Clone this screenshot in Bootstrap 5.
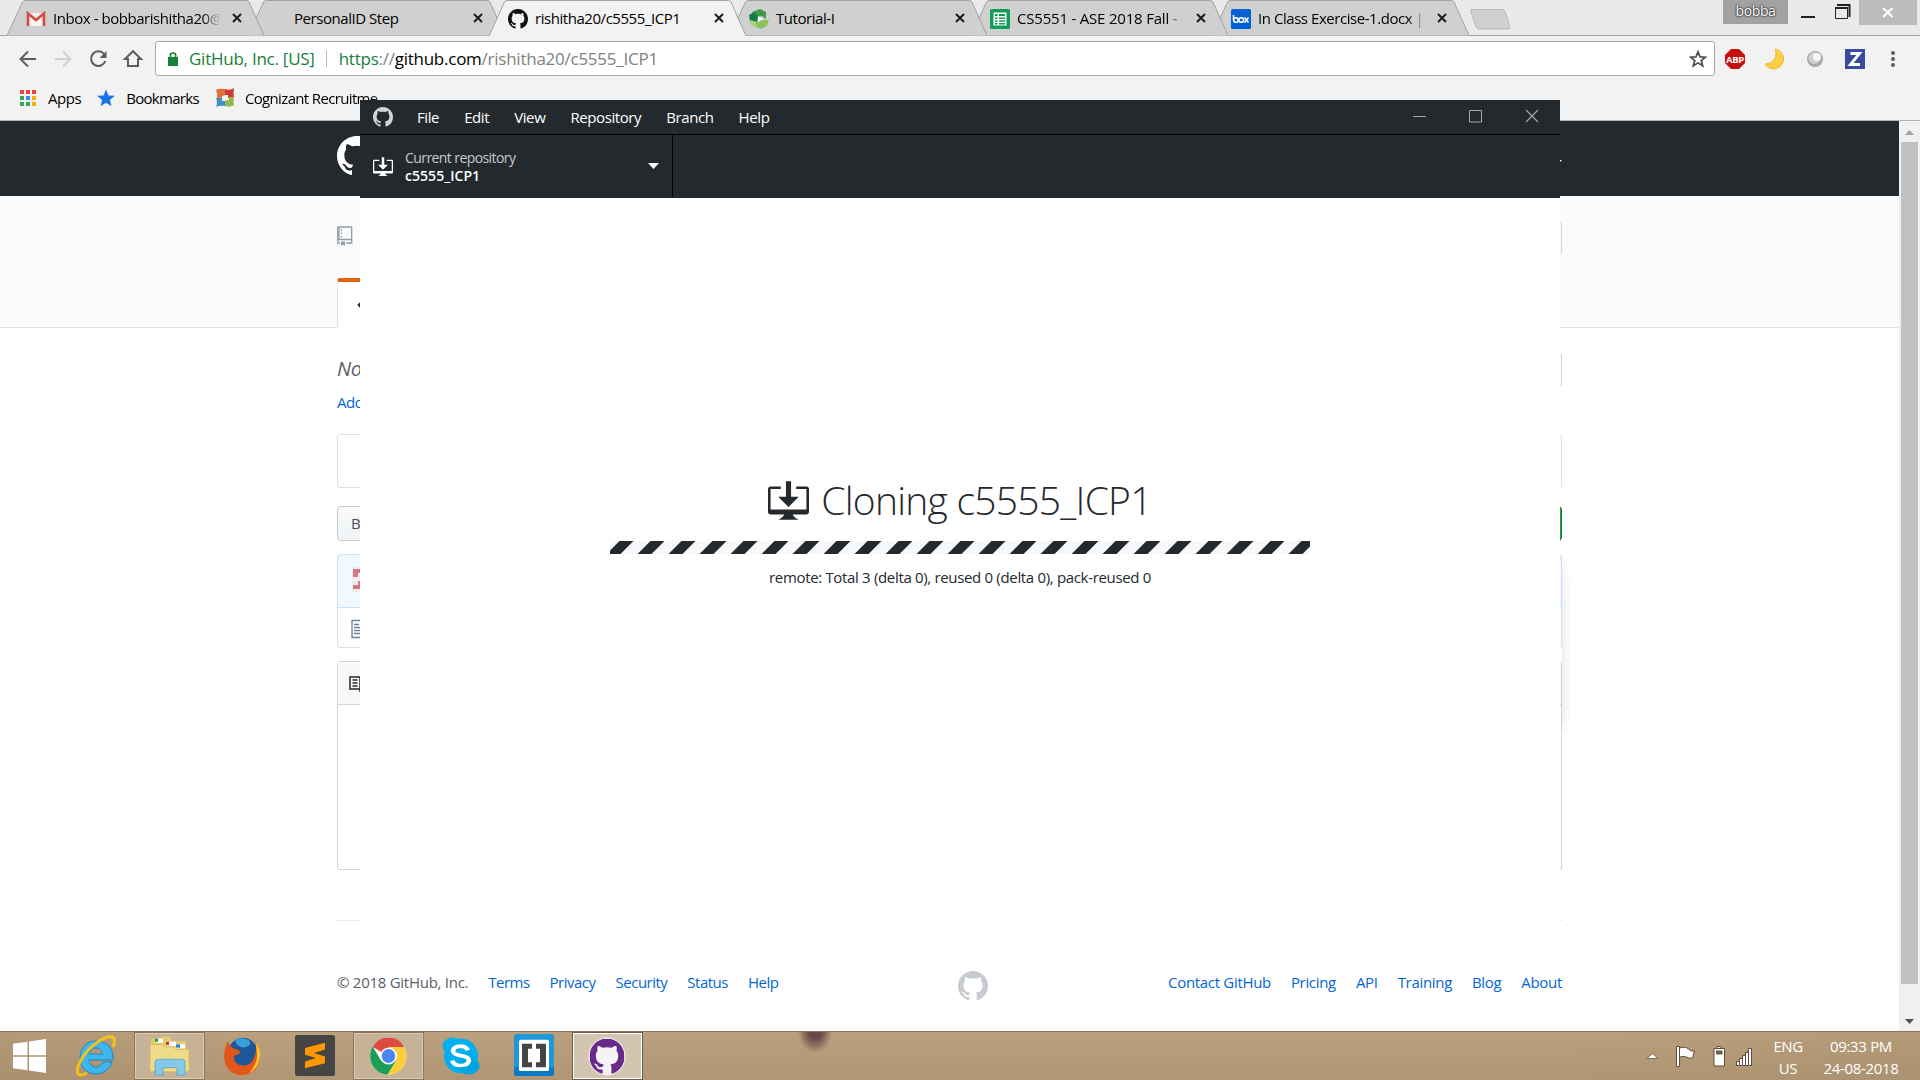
<!DOCTYPE html>
<html lang="en">
<head>
<meta charset="utf-8">
<title>rishitha20/c5555_ICP1</title>
<link href="https://cdn.jsdelivr.net/npm/bootstrap@5.3.0/dist/css/bootstrap.min.css" rel="stylesheet">
<script src="https://cdn.jsdelivr.net/npm/bootstrap@5.3.0/dist/js/bootstrap.bundle.min.js"></script>
<style>
body{font-family:"Open Sans","Noto Sans",sans-serif;font-size:15px;letter-spacing:-.45px;line-height:20px;color:#000;margin:0}
svg{display:block;flex:none}
a{text-decoration:none;color:#0366d6}
.screen{width:1920px;height:1080px}
/* tab strip */
.tabstrip{height:36px;background:#eaeaea;padding-left:7px;border-bottom:1px solid #a2a2a2}
.ctab{width:257px;height:36px;margin-right:-16px;padding:0 22px 0 19px;flex:none;position:relative;z-index:1;isolation:isolate}
.ctab .shape{position:absolute;left:0;top:0;z-index:-1}
.ctab.front{z-index:9}
.fav{width:20px;height:20px;margin-top:1px}
.tlabel{width:168px;margin-left:7px;white-space:pre;overflow:hidden;margin-top:-1px}
.fade-r{-webkit-mask-image:linear-gradient(90deg,#000 89%,transparent 100%)}
.who{width:65px;height:24px;background:#a2a2a2;color:#fff;font-size:14px;text-shadow:0 0 2px #000,0 0 2px #333;letter-spacing:-.4px;padding-bottom:2px}
.winx{width:58px;height:25px;background:#bcbcbc}
/* toolbar */
.toolbar{height:46px;background:#f2f2f2;padding:5px 0 0 18px}
.omni{width:1560px;height:35px;background:#fff;border:1px solid #a9a9a9;border-radius:3px;font-size:17px;letter-spacing:-.25px;padding-left:12px}
.green{color:#188038}.dim{color:#808080}
.bookbar{height:39px;background:#f2f2f2;border-bottom:1px solid #b3b3b3;padding:0 0 7px 19px}
/* page */
.page{background:#fff}
.gh-head{height:75px;background:#24292e}
.gh-repo{height:132px;background:#fafbfc;border-bottom:1px solid #e1e4e8}
.gh-wrap{width:1225px;margin-left:337px}
.gh-tab{width:110px;height:50px;background:#fff;border:1px solid #e1e4e8;border-top:4px solid #e36209;border-bottom:0;border-radius:3px 3px 0 0;margin-bottom:-1px}
.edge{border:1px solid #d1d5da;border-radius:3px}
.btn-grad{background:linear-gradient(#fafbfc,#eff3f6);border:1px solid #c5c9cd;border-radius:4px;width:180px;height:35px;color:#444d56;padding:0 0 2px 13px}
.btn-clone{width:180px;height:35px;background:#28a745;border:1px solid #176f2c}
.sbar{width:21px;background:#f0f0f0}
.thumb{width:17px;height:842px;background:#c1c1c1}
.shadow-menu{left:1562px;top:432px;width:9px;height:182px;background:linear-gradient(90deg,rgba(27,31,35,.07),transparent);-webkit-mask-image:linear-gradient(transparent,#000 15%,#000 90%,transparent)}
/* desktop window */
.desk{left:360px;top:100px;width:1200px;height:840px;background:#fff;z-index:20}
.dmenu{height:35px;background:#24292e;border-bottom:1px solid #000;color:#fff;padding-left:13px;letter-spacing:-.4px}
.dbar{height:63px;background:#24292e}
.drepo{width:313px;height:62px;border-right:1px solid #000;padding-left:13px}
.big{font-size:39px;font-weight:300;letter-spacing:-.75px;line-height:50px;color:#24292e}
/* taskbar */
.task{height:49px;border-top:1px solid #8c7558;background:linear-gradient(rgba(255,235,200,.06),rgba(0,0,0,.03)),linear-gradient(90deg,#ae9473,#b69b78 14%,#b69b78 80%,#b09673);position:relative;overflow:hidden}
.tbtn{height:48px;width:73px}
.tbtn.open{width:71px;border:1px solid #8c775c;box-shadow:inset 0 0 0 1px #d9cbb5;background:#c5b297}
.tbtn.act{border-color:#6b5a45;box-shadow:inset 0 0 0 1px #fff;background:#d3c5af}
.blob{position:absolute;left:797px;top:-8px;width:36px;height:30px;background:radial-gradient(ellipse at 50% 20%,#6b484c 25%,rgba(120,90,82,.7) 45%,transparent 68%)}
.tray{color:#fff;line-height:22px;text-align:center;padding-top:3px}
</style>
</head>
<body class="overflow-hidden">
<svg width="0" height="0" class="position-absolute">
<defs>
<symbol id="octo" viewBox="0 0 16 16"><path fill-rule="evenodd" d="M8 0C3.58 0 0 3.58 0 8c0 3.54 2.29 6.53 5.47 7.59.4.07.55-.17.55-.38 0-.19-.01-.82-.01-1.49-2.01.37-2.53-.49-2.69-.94-.09-.23-.48-.94-.82-1.13-.28-.15-.68-.52-.01-.53.63-.01 1.08.58 1.23.82.72 1.21 1.87.87 2.33.66.07-.52.28-.87.51-1.07-1.78-.2-3.64-.89-3.64-3.95 0-.87.31-1.59.82-2.15-.08-.2-.36-1.02.08-2.12 0 0 .67-.21 2.2.82.64-.18 1.32-.27 2-.27.68 0 1.36.09 2 .27 1.53-1.04 2.2-.82 2.2-.82.44 1.1.16 1.92.08 2.12.51.56.82 1.27.82 2.15 0 3.07-1.87 3.75-3.65 3.95.29.25.54.73.54 1.48 0 1.07-.01 1.93-.01 2.2 0 .21.15.46.55.38A8.013 8.013 0 0 0 16 8c0-4.42-3.58-8-8-8z"/></symbol>
<symbol id="deskdl" viewBox="0 0 16 15"><path fill-rule="evenodd" d="M4 6h3V0h2v6h3l-4 4-4-4zm11-4h-4v1h4v8H1V3h4V2H1c-.55 0-1 .45-1 1v9c0 .55.45 1 1 1h5.34c-.25.61-.86 1.39-2.34 2h8c-1.48-.61-2.09-1.39-2.34-2H15c.55 0 1-.45 1-1V3c0-.55-.45-1-1-1z"/></symbol>
<symbol id="tabg" viewBox="0 0 257 36"><path d="M0 35.5L15.500 2Q16.500 .5 18 .5H239.500Q241 .5 242 2L257 35.500" fill="#d0d0d0" stroke="#a2a2a2"/></symbol>
<symbol id="cx" viewBox="0 0 10 10"><path d="M1 1l8 8M9 1l-8 8" stroke="#1c1c1c" stroke-width="2"/></symbol>
<pattern id="stripes" width="31" height="13" patternUnits="userSpaceOnUse"><path d="M9.500 0h14L10.500 13H-3.500z" fill="#24292e"/><path d="M27.500 13H31V9.500z" fill="#24292e"/></pattern>
</defs>
</svg>

<div class="screen d-flex flex-column position-relative">
  <div class="tabstrip d-flex">
    <div class="ctab d-flex align-items-center" style="z-index:7"><svg class="shape" width="257" height="36"><use href="#tabg"/></svg>
      <svg class="fav" viewBox="0 0 20 20"><path d="M1 4h18v13H1z" fill="#eee"/><path d="M4 17V6l6 5 6-5v11" fill="#f6f6f6" stroke="#ddd"/><path d="M2 17V4.500l8 6.500 8-6.500V17" fill="none" stroke="#d54b3d" stroke-width="2.600"/></svg>
      <div class="tlabel fade-r">Inbox - bobbarishitha20@</div><svg class="ms-auto" width="10" height="10"><use href="#cx"/></svg></div>
    <div class="ctab d-flex align-items-center" style="z-index:6"><svg class="shape" width="257" height="36"><use href="#tabg"/></svg>
      <span class="fav"></span><div class="tlabel">PersonalID Step</div><svg class="ms-auto" width="10" height="10"><use href="#cx"/></svg></div>
    <div class="ctab front d-flex align-items-center"><svg class="shape" width="257" height="36"><path d="M0 36L15.500 2Q16.500 .5 18 .5H239.500Q241 .5 242 2L257 36" fill="#f2f2f2" stroke="#a2a2a2"/></svg>
      <svg class="fav" fill="#111"><use href="#octo"/></svg><div class="tlabel">rishitha20/c5555_ICP1</div><svg class="ms-auto" width="10" height="10"><use href="#cx"/></svg></div>
    <div class="ctab d-flex align-items-center" style="z-index:5"><svg class="shape" width="257" height="36"><use href="#tabg"/></svg>
      <svg class="fav" viewBox="0 0 20 20"><path d="M3 3l8-3 6 3v7l-4-3-4 1z" fill="#3d9b4a"/><path d="M0 6l5-3 4 4-1 9-7-3z" fill="#1b7a43"/><path d="M8 14l4-3h8l-2 6-6 3-5-2z" fill="#8bc25a"/><path d="M1 11l7 2-1 6-6-4z" fill="#a9d47c"/><path d="M9 7l5 3-5 3z" fill="#fff"/></svg>
      <div class="tlabel">Tutorial-I</div><svg class="ms-auto" width="10" height="10"><use href="#cx"/></svg></div>
    <div class="ctab d-flex align-items-center" style="z-index:4"><svg class="shape" width="257" height="36"><use href="#tabg"/></svg>
      <svg class="fav" viewBox="0 0 20 20"><rect width="20" height="20" rx="1.500" fill="#0f9d58"/><path d="M3.500 3.500h13v13h-13z" fill="#fff"/><path d="M5 5h2.500v2H5zM9 5h6v2H9zM5 8.500h2.500v1.500H5zM9 8.500h6v1.500H9zM5 11.200h2.500v1.500H5zM9 11.200h6v1.500H9zM5 14h2.500v1.500H5zM9 14h6v1.500H9z" fill="#0f9d58"/></svg>
      <div class="tlabel fade-r" style="letter-spacing:-.2px">CS5551 - ASE 2018 Fall - </div><svg class="ms-auto" width="10" height="10"><use href="#cx"/></svg></div>
    <div class="ctab d-flex align-items-center" style="z-index:3"><svg class="shape" width="257" height="36"><use href="#tabg"/></svg>
      <svg class="fav" viewBox="0 0 20 20"><rect width="20" height="20" rx="1.500" fill="#0061d5"/><g fill="none" stroke="#fff" stroke-width="1.600"><path d="M2.500 6v5"/><circle cx="4.900" cy="11" r="2.300"/><circle cx="10.200" cy="11" r="2.300"/><path d="M13.500 8.500l4 5m0-5l-4 5"/></g></svg>
      <div class="tlabel fade-r">In Class Exercise-1.docx |</div><svg class="ms-auto" width="10" height="10"><use href="#cx"/></svg></div>
    <svg class="ms-3 mt-2" width="44" height="24"><path d="M4 1.500h31q2 0 3 2l5 15q0 2.500-2 2.500H13q-3 0-4-2L4 3.500q-1-2 0-2z" transform="translate(-2)" fill="#d0d0d0" stroke="#b8b8b8"/></svg>
    <div class="d-flex ms-auto align-items-start">
      <div class="who d-flex align-items-center justify-content-center">bobba</div>
      <svg width="71" height="25"><path d="M13 17h14" stroke="#222" stroke-width="2"/><path d="M47.500 8h12v10.500h-12z" fill="none" stroke="#222"/><path d="M47 8h13M49 5h12.500v12" fill="none" stroke="#222" stroke-width="2"/></svg>
      <div class="winx d-flex align-items-center justify-content-center" style="margin-right:3px"><svg width="12" height="11"><path d="M1 1l9.500 9M10.500 1L1 10" stroke="#fff" stroke-width="2.200"/></svg></div>
    </div>
  </div>

  <div class="toolbar d-flex align-items-start">
    <svg width="137" height="36" fill="none" stroke="#5a5d61" stroke-width="2"><path d="M18 18H3m7-7.500L2.500 18l7.500 7.500"/><path d="M37 18h15m-7-7.500l7.500 7.500-7.500 7.500" stroke="#cfcfcf"/><path d="M86 13a7.300 7.300 0 1 0 1.300 7"/><path d="M88.500 10v7h-7z" fill="#5a5d61" stroke="none"/><path d="M110 25v-7h-3l8-7.800 8 7.800h-3v7z"/></svg>
    <div class="omni d-flex align-items-center">
      <svg width="10" height="14"><path d="M0 5h10v9H0z" fill="#188038"/><path d="M2.300 6V3.500a2.700 2.500 0 0 1 5.400 0V6" fill="none" stroke="#188038" stroke-width="1.600"/></svg>
      <span class="green" style="margin-left:11px">GitHub, Inc. [US]</span>
      <span class="vr bg-secondary opacity-50 my-2" style="margin:0 12px 0 11px"></span>
      <span><span class="green">https</span><span class="dim">://</span>github.com<span class="dim">/rishitha20/c5555_ICP1</span></span>
      <svg class="ms-auto" style="margin-right:7px" width="18" height="18" viewBox="0 0 18 18"><path d="M9 1.800l2 5.100 5.500.3-4.300 3.400 1.500 5.300L9 12.900l-4.700 3 1.500-5.300L1.500 7.200l5.500-.3z" fill="none" stroke="#4a4d51" stroke-width="1.700"/></svg>
    </div>
    <svg class="ms-2" width="190" height="36"><path d="M8 8h8l6 6v8l-6 6H8l-6-6v-8z" fill="#c70d0d"/><text x="12" y="22" font-size="9.500" font-weight="700" fill="#fff" text-anchor="middle" letter-spacing="-.3">ABP</text><path d="M52 8a10 10 0 1 1-10 15c9 0 13-8 10-15z" fill="#fccf3e" stroke="#eeb63a"/><circle cx="92" cy="18" r="8" fill="#a8a8a8"/><circle cx="91.500" cy="17" r="6" fill="#cfcfcf"/><circle cx="94" cy="16" r="4" fill="#f8f8f8"/><path d="M122 8h20v20h-20z" fill="#3c4a9e"/><path d="M127.500 12.500h9l-9 11h9.500" fill="none" stroke="#fff" stroke-width="2.800"/><g fill="#5a5d61"><circle cx="170" cy="12" r="2"/><circle cx="170" cy="18" r="2"/><circle cx="170" cy="24" r="2"/></g></svg>
  </div>
  <div class="bookbar d-flex align-items-center">
    <svg width="18" height="18"><path d="M1 1h4v4H1zM7 1h4v4H7zM13 1h4v4h-4z" fill="#ea4335"/><path d="M1 7h4v4H1zM1 13h4v4H1zM7 13h4v4H7z" fill="#34a853"/><path d="M7 7h4v4H7z" fill="#4285f4"/><path d="M13 7h4v4h-4zM13 13h4v4h-4z" fill="#fbab05"/></svg>
    <span style="margin-left:11px">Apps</span>
    <svg style="margin-left:16px" width="18" height="18" viewBox="0 0 18 18"><path d="M9 .5l2.400 5.900 6.400.4-4.900 4.100 1.600 6.300L9 13.800l-5.500 3.400 1.600-6.300L.2 6.800l6.400-.4z" fill="#1a73e8"/></svg>
    <span style="margin-left:11px;letter-spacing:-.7px">Bookmarks</span>
    <svg style="margin-left:16px" width="20" height="20"><path d="M1 2q3-2 9-1v7H7v3H2q1-5-1-9z" fill="#e0703c"/><path d="M10 1q5 2 9-1-1 5 0 9l-6 1V7h-3z" fill="#cf3c35"/><path d="M19 9q-1 4 0 8-4 3-9 1v-6h4V9z" fill="#93b850"/><path d="M10 18q-5-1-9 1 2-5 0-9h6v3h3z" fill="#3e92c4"/><circle cx="10" cy="10" r="2.800" fill="#f2f2f2"/></svg>
    <span class="text-nowrap fade-r overflow-hidden" style="margin-left:10px;letter-spacing:-.65px;width:144px">Cognizant Recruitme</span>
  </div>

  <div class="page flex-grow-1 d-flex overflow-hidden position-relative">
    <div class="flex-grow-1">
      <div class="gh-head"><div class="gh-wrap d-flex justify-content-between pt-3"><svg width="40" height="40" fill="#fff" style="margin-top:-1px"><use href="#octo"/></svg><svg width="10" height="40"><path d="M0 23h10l-5 5z" fill="#fff"/></svg></div></div>
      <div class="gh-repo"><div class="gh-wrap h-100 d-flex flex-column justify-content-between">
        <div class="d-flex justify-content-between" style="padding-top:25px"><svg width="16" height="20" viewBox="0 0 16 20" style="margin-top:5px" fill="none" stroke="#959da5" stroke-width="1.300"><path d="M.7 1h14v16H9M.7 1v16H3M1 13.500h14"/><path d="M2 1v12"/><path d="M4.500 3v9" stroke-dasharray="1.500 2"/><path d="M4 15.500h4V20l-2-1.500L4 20z" fill="#959da5" stroke="none"/></svg><div class="edge" style="width:90px;height:34px"></div></div>
        <div class="gh-tab d-flex align-items-center"><svg width="18" height="16" style="margin-left:19px"><path d="M6 4L2 8l4 4" stroke="#24292e" stroke-width="2.500" fill="none"/></svg></div>
      </div></div>
      <div class="gh-wrap">
        <div class="d-flex justify-content-between" style="padding-top:25px;height:64px"><span class="fst-italic" style="font-size:20px;line-height:31px;color:#586069;letter-spacing:-.3px">No description</span><div class="edge" style="width:60px;height:34px"></div></div>
        <div style="height:42px"><a href="#" class="text-nowrap">Add topics</a></div>
        <div class="edge" style="height:54px;border-color:#dfe2e5"></div>
        <div class="d-flex justify-content-between" style="margin-top:18px"><div class="btn-grad d-flex align-items-center">Branch: master</div><div class="btn-clone rounded-1"></div></div>
        <div class="edge" style="margin-top:13px;height:94px;border-color:#dfe2e5">
          <div class="rounded-top" style="margin:-1px -1px 0;height:54px;background:#f1f8ff;border:1px solid #c8e1ff;padding:12px 0 0 14px"><svg width="25" height="25"><path d="M0 0h25v25H0z" fill="#f0ecec"/><path d="M1 2h10v4H6v4H1zM6 14h5v8H1v-4h5z" fill="#d17a86"/></svg></div>
          <svg width="16" height="20" style="margin:11px 0 0 13px" fill="none" stroke="#6a82a0"><path d="M1 1.500h10l4 4v13H1zM3 5.500h5M3 8.500h9M3 11.500h9M3 14.500h9" stroke-width="1.300"/></svg>
        </div>
        <div class="edge" style="margin-top:13px;height:209px">
          <div class="d-flex align-items-center" style="height:43px;background:#f6f8fa;border-bottom:1px solid #d1d5da;padding:2px 0 0 11px"><svg width="24" height="18" fill="none" stroke="#24292e" stroke-width="1.500"><path d="M1 2h10v12H1zM11 2h10v12H11zM3.500 5h5M3.500 8h5M3.500 11h5M11 14v3"/></svg></div>
        </div>
        <div class="d-flex justify-content-between" style="margin-top:50px;border-top:1px solid #eaecef;padding-top:50px;color:#586069">
          <div class="d-flex" style="gap:20px;padding-top:1px;letter-spacing:-.5px"><span style="letter-spacing:-.27px">© 2018 GitHub, Inc.</span><a href="#">Terms</a><a href="#">Privacy</a><a href="#">Security</a><a href="#">Status</a><a href="#">Help</a></div>
          <svg width="30" height="30" fill="#c6cbd1"><use href="#octo"/></svg>
          <div class="d-flex" style="gap:20px;padding-top:1px;letter-spacing:-.32px"><a href="#">Contact GitHub</a><a href="#">Pricing</a><a href="#">API</a><a href="#">Training</a><a href="#">Blog</a><a href="#">About</a></div>
        </div>
      </div>
    </div>
    <div class="shadow-menu position-absolute"></div>
    <div class="sbar d-flex flex-column align-items-center">
      <svg width="21" height="21"><path d="M6 14l4.500-5 4.500 5z" fill="#a3a3a3"/></svg><div class="thumb"></div><svg class="mt-auto" width="21" height="21"><path d="M6 9l4.500 5L15 9z" fill="#505050"/></svg>
    </div>
  </div>

  <div class="task d-flex align-items-start">
    <div class="blob"></div>
    <div class="tbtn d-flex align-items-center" style="width:61px;padding-left:13px"><svg width="34" height="34" viewBox="0 0 34 42" preserveAspectRatio="none"><path d="M0 6l14.500-2.500V20H0zM16 3.200L33 0v20H16zM0 22h14.500v16.500L0 36zM16 22h17v20l-17-3.200z" fill="#fff"/></svg></div>
    <div class="tbtn d-flex align-items-center" style="padding-left:15px"><svg width="40" height="48" viewBox="0 0 40 48" preserveAspectRatio="none"><path d="M20 9c-10 0-16 8-16 17s7 16 16 16c8 0 14-5 16-12h-9c-1 3-4 5-7 5-4 0-7-3-7-7h24C38 16 31 9 20 9zm-7 13c1-4 4-6 7-6s6 2 7 6z" fill="#3db7ec" stroke="#1f86c8"/><path d="M37 15c2-5 2-9-1-10C29 3 12 15 5 28c-5 9-5 15 0 15 2 0 4-1 6-2" fill="none" stroke="#f5c21b" stroke-width="3"/></svg></div>
    <div class="tbtn open d-flex align-items-center justify-content-center"><svg width="40" height="40" viewBox="0 0 40 48" preserveAspectRatio="none"><path d="M1 8V3h10l1-2h8l2 5h14v10H1z" fill="#e5cc6a"/><path d="M5 3h8v5H5zM16 7h10v5H16zM26 10h9v5h-9z" fill="#fff"/><path d="M5 3h3v4H5z" fill="#2a9d46"/><path d="M16 7h3v4h-3z" fill="#d5332b"/><path d="M26 10h4v4h-4z" fill="#2b87d1"/><path d="M0 10h13l2 3h9l2 3h13v25q0 2-2 2H2q-2 0-2-2z" fill="#f0dc88" stroke="#d6bb57"/><path d="M5 47V31q0-3 3-3h24q3 0 3 3v16h-8v-9H13v9z" fill="#86c8e8" stroke="#5ba7d0"/></svg></div>
    <div class="tbtn d-flex align-items-center justify-content-center" style="width:74px"><svg width="38" height="40" viewBox="0 0 38 46" preserveAspectRatio="none"><ellipse cx="20" cy="21" rx="15" ry="19" fill="#1f5796"/><path d="M12 5q6-5 14 0 4 6-4 8-8 1-10-8z" fill="#3aa0d8"/><path d="M5 6Q1 13 1 24q1 20 18 21 18-1 18-24 0-8-5-14 3 8-1 18-3 9-11 9-10-1-9-11l6-3-1-4-6-2q-4-3-5-8z" fill="#e4571b"/><path d="M33 8q5 7 4 15-1 14-11 20 9-12 8-22z" fill="#fbc72c"/></svg></div>
    <div class="tbtn d-flex align-items-center justify-content-center" style="width:74px"><svg width="40" height="42" viewBox="0 0 40 42" style="margin:-2px 2px 0 0"><rect width="40" height="41" y="1" rx="2.500" fill="#454545"/><path d="M10 14l20-6v8l-11 4 11 4v8l-20 6v-8l11-4-11-4z" fill="#ff9800" transform="translate(0 2) scale(1 .85)"/></svg></div>
    <div class="tbtn open d-flex align-items-center justify-content-center"><svg width="37" height="38" viewBox="0 0 40 40" preserveAspectRatio="none"><circle cx="20" cy="20" r="19.500" fill="#fff"/><path d="M20 20L3 10.500A19.500 19.500 0 0 1 37 10.500z" fill="#dd4b3e"/><path d="M20 10.500h17A19.500 19.500 0 0 1 19 39.500l9-15z" fill="#fdcd3f"/><path d="M3 10A19.500 19.500 0 0 0 19 39.500l9-14.500H12z" fill="#1a9f59"/><circle cx="20" cy="20" r="9" fill="#fff"/><circle cx="20" cy="20" r="7.300" fill="#4a86ef"/></svg></div>
    <div class="tbtn d-flex align-items-center justify-content-center" style="width:74px"><svg width="38" height="38" viewBox="0 0 38 46" preserveAspectRatio="none"><ellipse cx="19" cy="23" rx="17" ry="21" fill="#00aff0"/><ellipse cx="11" cy="11" rx="10.500" ry="10.500" fill="#00aff0"/><ellipse cx="27" cy="35" rx="10.500" ry="10.500" fill="#00a5e4"/><path d="M26 16q-2-5-8-5-7 1-7 6 0 4 8 5.500t8 6q-1 6-8 6t-9-6" fill="none" stroke="#fff" stroke-width="4.500"/></svg></div>
    <div class="tbtn d-flex align-items-center justify-content-center" style="width:74px"><svg width="40" height="42" viewBox="0 2 40 43" preserveAspectRatio="none" style="margin:-3px 2px 0 0"><rect y="2" width="40" height="43" rx="3" fill="#1c99d9"/><path d="M0 36h40v6q0 3-3 3H3q-3 0-3-3z" fill="#0a7ac6"/><rect x="5" y="8" width="30" height="32" rx="2" fill="#fff"/><path d="M8 12h10v5h-4v14h4v5H8zM32 12H22v5h4v14h-4v5h10z" fill="#454545"/></svg></div>
    <div class="tbtn open act d-flex align-items-center justify-content-center"><svg width="38" height="39" viewBox="0 0 40 40" preserveAspectRatio="none" style="margin-right:2px"><circle cx="20" cy="20" r="19.500" fill="#f2f2f2"/><svg x="1.500" y="1.500" width="37" height="37" viewBox="0 0 16 16"><circle cx="8" cy="8" r="7.900" fill="#f4f4f4"/><use href="#octo" fill="#6a2a8c" width="16" height="16"/></svg></svg></div>
    <div class="ms-auto d-flex">
      <svg width="122" height="48"><path d="M6 26.500l5.500-5 5.500 5z" fill="#fff" stroke="#7b6c58"/><g stroke="#5d4d3b" fill="#fff" transform="translate(2 0)"><path d="M33.500 14.500h3v20h-3z"/><path d="M36.500 16q6-2 9 1 3 3 6 2l-2 7q-4 1-6-1-3-1-7 0z"/><path d="M71 16.500h10.500v17.500H71zM74 14.500h4v2h-4z"/><path d="M73 18.500h6.500v4H73z" fill="#6d5b47" stroke="none"/><path d="M93.500 29.500h3v4h-3zM96.500 26.500h3v7h-3zM99.500 23.500h3v10h-3zM102.500 20.500h3v13h-3zM105.500 16.500h3v17h-3z"/></g></svg>
      <div class="tray" style="width:38px;margin-left:6px">ENG<br>US</div>
      <div class="tray" style="width:84px;margin:0 17px 0 12px;letter-spacing:-.33px">09:33 PM<br>24-08-2018</div>
    </div>
  </div>

  <div class="desk position-absolute">
    <div class="dmenu d-flex align-items-center">
      <svg width="20" height="20" fill="#d1d5da"><use href="#octo"/></svg>
      <div class="d-flex" style="gap:25px;margin-left:24px"><span>File</span><span>Edit</span><span>View</span><span>Repository</span><span>Branch</span><span>Help</span></div>
      <svg class="ms-auto" width="147" height="34" fill="none" stroke="#a5a7a9"><path d="M0 16.500h13"/><path d="M56.500 10.500h12v11.500h-12z"/><path d="M113 10l12 12M125 10l-12 12" stroke-width="1.200"/></svg>
    </div>
    <div class="dbar"><div class="drepo d-flex align-items-center">
      <svg width="20" height="19" fill="#fff"><use href="#deskdl"/></svg>
      <div style="margin-left:12px;padding-top:2px;line-height:18.500px;font-size:14px"><div style="color:#c6cacd;letter-spacing:-.58px">Current repository</div><div class="text-white" style="font-weight:600;letter-spacing:.05px">c5555_ICP1</div></div>
      <svg class="ms-auto" width="11" height="6" style="margin-right:13px"><path d="M0 0h11L5.500 6z" fill="#fff"/></svg>
    </div></div>
    <div class="d-flex flex-column align-items-center" style="padding-top:277px">
      <div class="d-flex align-items-center"><svg width="41" height="39" fill="#24292e" style="margin-right:12px"><use href="#deskdl"/></svg><span class="big">Cloning c5555_ICP1</span></div>
      <svg width="700" height="13" style="margin-top:16px"><rect width="700" height="13" fill="#f6f8fa"/><rect width="700" height="13" fill="url(#stripes)"/></svg>
      <div style="margin-top:13px;color:#24292e;letter-spacing:-.33px">remote: Total 3 (delta 0), reused 0 (delta 0), pack-reused 0</div>
    </div>
  </div>
</div>
</body>
</html>
